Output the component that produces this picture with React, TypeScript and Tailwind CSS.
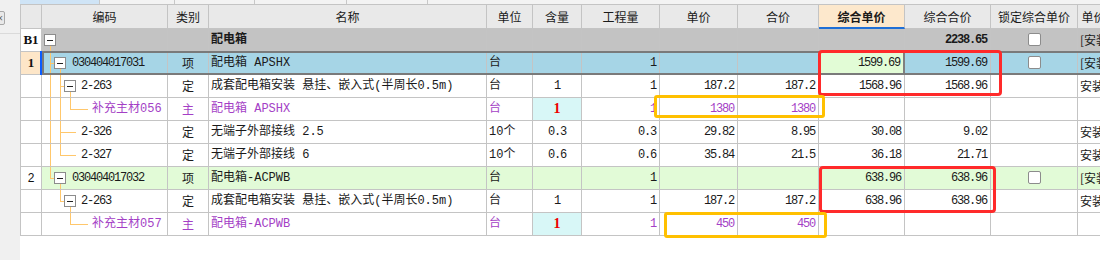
import React from "react";

const W = [
  "w-[21px]",
  "w-[126px]",
  "w-[41px]",
  "w-[278px]",
  "w-[46px]",
  "w-[49px]",
  "w-[78px]",
  "w-[78px]",
  "w-[81px]",
  "w-[86px]",
  "w-[86px]",
  "w-[87px]",
  "w-[80px]",
];

const CELL =
  "shrink-0 overflow-hidden whitespace-nowrap border-r border-b border-[#c4c4c4] h-[23px] text-[12px] leading-[22px]";
const MONO = "font-['Liberation_Mono','Noto_Sans_CJK_SC',monospace]";
const NUM = "font-['Liberation_Mono',monospace] tracking-[-1.2px] text-right pr-[3px]";
const CJK = "font-['Noto_Sans_CJK_SC',sans-serif]";
const PURPLE = "text-[#a43fc6]";

const HEADERS = [
  "",
  "编码",
  "类别",
  "名称",
  "单位",
  "含量",
  "工程量",
  "单价",
  "合价",
  "综合单价",
  "综合合价",
  "锁定综合单价",
  "单价构成文件",
];

type Row = {
  num: string;
  numBold?: boolean;
  numBg: string;
  bg: string;
  box?: number;
  segs: number[][];
  tx: number;
  code: string;
  type: string;
  name: string;
  nameBold?: boolean;
  unit: string;
  content: string;
  qty: string;
  price: string;
  total: string;
  cprice: string;
  ctotal: string;
  ctotalBold?: boolean;
  lock: boolean;
  last: string;
  main?: boolean;
  sel?: boolean;
};

const NAME_INSTALL = "成套配电箱安装 悬挂、嵌入式(半周长0.5m)";

const ROWS: Row[] = [
  {
    num: "B1", numBold: true, numBg: "bg-white", bg: "bg-[#c3c3c3]",
    box: 2, segs: [[8, 17, 1, 6]], tx: 30, code: "",
    type: "", name: "配电箱", nameBold: true, unit: "", content: "", qty: "",
    price: "", total: "", cprice: "", ctotal: "2238.65", ctotalBold: true,
    lock: true, last: "[安装工程]",
  },
  {
    num: "1", numBold: true, numBg: "bg-[#fde6c8]", bg: "bg-[#a6d5e6]", sel: true,
    box: 12, segs: [[8, 0, 1, 23], [8, 11, 4, 1], [18, 17, 1, 6]], tx: 30,
    code: "030404017031", type: "项", name: "配电箱 APSHX", unit: "台",
    content: "", qty: "1", price: "", total: "", cprice: "1599.69",
    ctotal: "1599.69", lock: true, last: "[安装工程]",
  },
  {
    num: "", numBg: "bg-white", bg: "bg-white",
    box: 22, segs: [[8, 0, 1, 23], [18, 0, 1, 23], [18, 11, 4, 1], [28, 17, 1, 6]], tx: 39,
    code: "2-263", type: "定", name: NAME_INSTALL, unit: "台", content: "1",
    qty: "1", price: "187.2", total: "187.2", cprice: "1568.96", ctotal: "1568.96",
    lock: false, last: "安装工程",
  },
  {
    num: "", numBg: "bg-white", bg: "bg-white", main: true,
    segs: [[8, 0, 1, 23], [18, 0, 1, 23], [28, 0, 1, 12], [28, 11, 18, 1]], tx: 50,
    code: "补充主材056", type: "主", name: "配电箱 APSHX", unit: "台", content: "1",
    qty: "1", price: "1380", total: "1380", cprice: "", ctotal: "", lock: false, last: "",
  },
  {
    num: "", numBg: "bg-white", bg: "bg-white",
    segs: [[8, 0, 1, 23], [18, 0, 1, 23], [18, 11, 16, 1]], tx: 39,
    code: "2-326", type: "定", name: "无端子外部接线 2.5", unit: "10个", content: "0.3",
    qty: "0.3", price: "29.82", total: "8.95", cprice: "30.08", ctotal: "9.02",
    lock: false, last: "安装工程",
  },
  {
    num: "", numBg: "bg-white", bg: "bg-white",
    segs: [[8, 0, 1, 23], [18, 0, 1, 12], [18, 11, 16, 1]], tx: 39,
    code: "2-327", type: "定", name: "无端子外部接线 6", unit: "10个", content: "0.6",
    qty: "0.6", price: "35.84", total: "21.5", cprice: "36.18", ctotal: "21.71",
    lock: false, last: "安装工程",
  },
  {
    num: "2", numBg: "bg-white", bg: "bg-[#e2fbd7]",
    box: 12, segs: [[8, 0, 1, 12], [8, 11, 4, 1], [18, 17, 1, 6]], tx: 30,
    code: "030404017032", type: "项", name: "配电箱-ACPWB", unit: "台", content: "",
    qty: "1", price: "", total: "", cprice: "638.96", ctotal: "638.96",
    lock: true, last: "[安装工程]",
  },
  {
    num: "", numBg: "bg-white", bg: "bg-white",
    box: 22, segs: [[18, 0, 1, 12], [18, 11, 4, 1], [28, 17, 1, 6]], tx: 39,
    code: "2-263", type: "定", name: NAME_INSTALL, unit: "台", content: "1",
    qty: "1", price: "187.2", total: "187.2", cprice: "638.96", ctotal: "638.96",
    lock: false, last: "安装工程",
  },
  {
    num: "", numBg: "bg-white", bg: "bg-white", main: true,
    segs: [[28, 0, 1, 12], [28, 11, 18, 1]], tx: 50,
    code: "补充主材057", type: "主", name: "配电箱-ACPWB", unit: "台", content: "1",
    qty: "1", price: "450", total: "450", cprice: "", ctotal: "", lock: false, last: "",
  },
];

function TreeCode({ row }: { row: Row }) {
  const ascii = /^[\x00-\x7f]*$/.test(row.code);
  return (
    <div className={`${CELL} ${W[1]} relative`}>
      <svg
        className="pointer-events-none absolute top-0 left-0 overflow-visible"
        width={60}
        height={23}
        shapeRendering="crispEdges"
      >
        {row.segs.map(([x, y, w, h], i) => (
          <rect key={i} x={x} y={y} width={w} height={h} fill="#ffc76b" />
        ))}
        {row.box !== undefined && (
          <g>
            <rect x={row.box + 0.5} y={5.5} width={11} height={11} fill="#fff" stroke="#8c8c8c" />
            <rect x={row.box + 3} y={11} width={6} height={1} fill="#222" />
          </g>
        )}
      </svg>
      <span
        className={`absolute top-0 ${MONO} ${ascii ? "tracking-[-1.2px]" : ""} ${
          row.main ? PURPLE : "text-[#1a1a1a]"
        }`}
        style={{ left: row.tx }}
      >
        {row.code}
      </span>
    </div>
  );
}

function Check() {
  return <div className="mx-auto mt-[4px] h-[13px] w-[13px] rounded-[2px] border border-[#8c8c8c] bg-white" />;
}

function BodyRow({ row }: { row: Row }) {
  const txt = row.main ? PURPLE : "text-[#1a1a1a]";
  return (
    <div className={`relative flex ${row.bg}`}>
      <div
        className={`${CELL} ${W[0]} ${row.numBg} text-center text-[#111] ${
          row.numBold
            ? "font-['Liberation_Serif',serif] text-[13px] font-bold"
            : "font-['Liberation_Sans',sans-serif]"
        }`}
      >
        {row.num}
      </div>
      <TreeCode row={row} />
      <div className={`${CELL} ${W[2]} ${CJK} text-center ${txt}`}>{row.type}</div>
      <div className={`${CELL} ${W[3]} ${MONO} pl-[2px] ${txt} ${row.nameBold ? "font-bold" : ""}`}>
        {row.name}
      </div>
      <div className={`${CELL} ${W[4]} ${MONO} pl-[2px] ${txt}`}>{row.unit}</div>
      <div
        className={`${CELL} ${W[5]} text-center ${
          row.main
            ? "bg-[#d8f7f7] font-['Liberation_Serif',serif] text-[14px] font-bold text-[#ee0000]"
            : "font-['Liberation_Mono',monospace] tracking-[-1.2px] text-[#1a1a1a]"
        }`}
      >
        {row.content}
      </div>
      <div className={`${CELL} ${W[6]} ${NUM} ${txt}`}>{row.qty}</div>
      <div className={`${CELL} ${W[7]} ${NUM} ${txt}`}>{row.price}</div>
      <div className={`${CELL} ${W[8]} ${NUM} ${txt}`}>{row.total}</div>
      <div
        className={`${CELL} ${W[9]} ${NUM} text-[#1a1a1a] ${
          row.sel ? "border-r-2 border-r-[#808080] bg-[#e2fcd6]" : ""
        }`}
      >
        {row.cprice}
      </div>
      <div className={`${CELL} ${W[10]} ${NUM} text-[#1a1a1a] ${row.ctotalBold ? "font-bold" : ""}`}>
        {row.ctotal}
      </div>
      <div className={`${CELL} ${W[11]}`}>{row.lock && <Check />}</div>
      <div className={`${CELL} ${W[12]} ${CJK} pl-[2px] text-[#1a1a1a]`}>{row.last}</div>
      {row.sel && (
        <>
          <div className="pointer-events-none absolute -top-px right-0 bottom-0 left-[21px] border-2 border-[#7a7a7a]" />
          <div className="pointer-events-none absolute -top-px bottom-0 left-[19px] w-[2px] bg-[#0a5cff]" />
        </>
      )}
    </div>
  );
}

export default function App() {
  return (
    <div className="relative flex h-[260px] w-[1100px] overflow-hidden bg-white">
      <div className="relative w-[20px] shrink-0 bg-[#f0f0f0]">
        <div className="absolute top-[11px] -left-[7px] flex h-[14px] w-[12px] items-center justify-end rounded-[2px] border border-[#a8a8a8] bg-[#e9e9e9] pr-px text-[10px] leading-none text-[#666]">
          ×
        </div>
        <div className="absolute top-[33px] left-0 h-px w-full bg-[#dadada]" />
      </div>

      <div className="flex min-w-0 flex-1 flex-col overflow-hidden">
        <div className="flex h-[4px] shrink-0">
          <div className="w-[80px] shrink-0 border-r border-[#c8c8c8] bg-[#cfe4f6]" />
          <div className="w-[75px] shrink-0 border-r border-[#c8c8c8] bg-[#f3f3f3]" />
          <div className="w-[80px] shrink-0 border-r border-[#c8c8c8] bg-[#f3f3f3]" />
          <div className="w-[92px] shrink-0 border-r border-[#c8c8c8] bg-[#f3f3f3]" />
          <div className="w-[81px] shrink-0 border-r border-[#c8c8c8] bg-[#f3f3f3]" />
          <div className="flex-1 bg-[#f3f3f3]" />
        </div>

        <div className="w-max border-t border-l border-[#c4c4c4]">
          <div className="flex bg-[#e9e9e9]">
            {HEADERS.map((h, i) => (
              <div
                key={i}
                className={`${W[i]} h-[24px] shrink-0 overflow-hidden border-r border-b border-[#c4c4c4] text-center ${CJK} text-[12px] leading-[23px] whitespace-nowrap text-[#1a1a1a] ${
                  i === 9 ? "border-b-2 border-b-[#1f6fd6] bg-[#fde8cc] font-bold" : ""
                }`}
              >
                {h}
              </div>
            ))}
          </div>
          {ROWS.map((r, i) => (
            <BodyRow key={i} row={r} />
          ))}
        </div>
      </div>

      {/* annotations */}
      <div className="pointer-events-none absolute top-[50px] left-[818px] h-[46px] w-[184px] rounded-[4px] border-[3px] border-[#ff2a2a]" />
      <div className="pointer-events-none absolute top-[166px] left-[819px] h-[47px] w-[177px] rounded-[4px] border-[3px] border-[#ff2a2a]" />
      <div className="pointer-events-none absolute top-[95px] left-[654px] h-[23px] w-[171px] rounded-[3px] border-[3px] border-[#ffc000]" />
      <div className="pointer-events-none absolute top-[212px] left-[664px] h-[26px] w-[163px] rounded-[3px] border-[3px] border-[#ffc000]" />
    </div>
  );
}
